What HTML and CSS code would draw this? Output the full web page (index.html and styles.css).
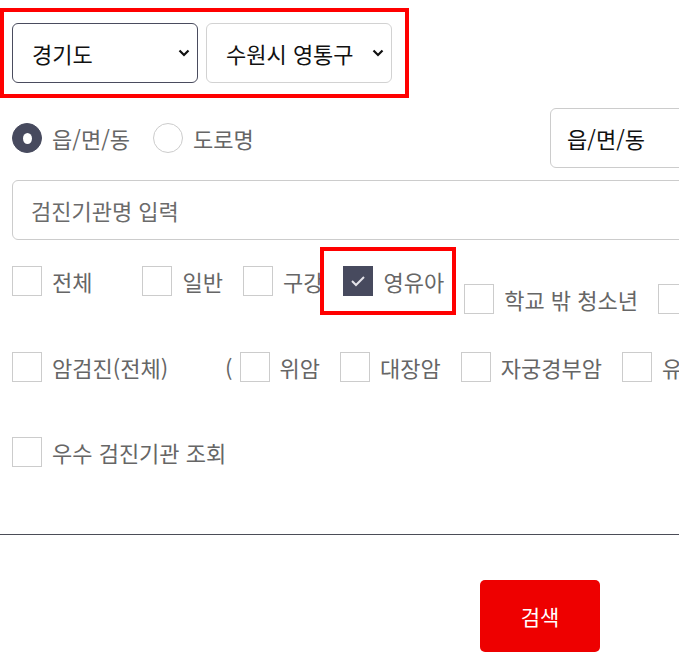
FILE: index.html
```html
<!DOCTYPE html>
<html lang="ko">
<head>
    <meta charset="UTF-8">
    <meta name="viewport" content="width=device-width, initial-scale=1.0">
    <title>검진기관 찾기</title>
    <link rel="stylesheet" href="styles.css">
</head>
<body>
    <div class="page">
        <!-- 시/도, 시/군/구 선택 -->
        <div class="region">
            <div class="select active">
                <span>경기도</span>
                <svg class="chev" width="12" height="8" viewBox="0 0 12 8"><polyline points="1.5,1.5 6,6 10.5,1.5" /></svg>
            </div>
            <div class="select">
                <span>수원시 영통구</span>
                <svg class="chev" width="12" height="8" viewBox="0 0 12 8"><polyline points="1.5,1.5 6,6 10.5,1.5" /></svg>
            </div>
        </div>

        <div class="form">
            <!-- 주소 구분 -->
            <div class="addr-row">
                <div class="radios">
                    <label class="radio"><span class="dot on"></span>읍/면/동</label>
                    <label class="radio"><span class="dot"></span>도로명</label>
                </div>
                <div class="field dong">읍/면/동</div>
            </div>

            <input type="text" class="field name" placeholder="검진기관명 입력">

            <!-- 검진 종류 -->
            <div class="checks first">
                <label class="check wide"><span class="box"></span>전체</label>
                <label class="check"><span class="box"></span>일반</label>
                <label class="check tight"><span class="box"></span>구강</label>
                <label class="check highlight"><span class="box on"><svg width="30" height="30" viewBox="0 0 30 30"><polyline points="9,15 13,19 21,11" /></svg></span>영유아</label>
                <label class="check low"><span class="box"></span>학교 밖 청소년</label>
                <label class="check low"><span class="box"></span></label>
            </div>

            <div class="checks second">
                <label class="check cancer"><span class="box"></span>암검진(전체)</label>
                <span class="paren">(</span>
                <label class="check"><span class="box"></span>위암</label>
                <label class="check"><span class="box"></span>대장암</label>
                <label class="check"><span class="box"></span>자궁경부암</label>
                <label class="check"><span class="box"></span>유방암</label>
            </div>

            <div class="checks third">
                <label class="check"><span class="box"></span>우수 검진기관 조회</label>
            </div>
        </div>

        <hr class="divider">

        <div class="actions">
            <button class="btn-search">검색</button>
        </div>
    </div>
</body>
</html>
```

FILE: styles.css
```css
/* Base */
html, body {
    margin: 0;
    overflow: hidden;
}

body {
    font-family: "Noto Sans CJK KR", "Noto Sans", sans-serif;
    font-size: 22px;
    color: #666;
    background: #fff;
}

/* the page is wider than the window and gets clipped */
.page {
    width: 1080px;
}

/* Region selects (highlighted) */
.region {
    display: inline-flex;
    gap: 8px;
    margin-top: 8px;
    padding: 11px 13px 11px 8px;
    border: 4px solid #ff0000;
}

.select {
    box-sizing: border-box;
    width: 186px;
    height: 60px;
    padding: 0 7px 0 19px;
    border: 1px solid #d2d2d2;
    border-radius: 6px;
    display: flex;
    align-items: center;
    justify-content: space-between;
    color: #111;
}

.select.active {
    border-color: #4a4c5e;
}

.chev polyline {
    fill: none;
    stroke: #111;
    stroke-width: 2.2;
}

/* Form */
.form {
    padding: 0 12px;
}

.addr-row {
    display: grid;
    grid-template-columns: 538px 1fr;
    align-items: center;
    height: 60px;
    margin-top: 10px;
}

.radios {
    display: flex;
    align-items: center;
}

.radio {
    display: flex;
    align-items: center;
    gap: 10px;
    margin-right: 23px;
}

.dot {
    box-sizing: border-box;
    width: 30px;
    height: 30px;
    border: 1px solid #ccc;
    border-radius: 50%;
    position: relative;
}

.dot.on {
    border-color: #474a5e;
    background: #474a5e;
}

.dot.on::after {
    content: "";
    position: absolute;
    left: 10px;
    top: 9px;
    width: 9px;
    height: 11px;
    border-radius: 50%;
    background: #fff;
}

.field {
    box-sizing: border-box;
    height: 60px;
    border: 1px solid #ccc;
    border-radius: 6px;
    display: flex;
    align-items: center;
    font-family: inherit;
    font-size: 22px;
}

.dong {
    padding-left: 16px;
    color: #111;
}

.name {
    width: 100%;
    margin-top: 12px;
    padding: 0 18px;
    color: #333;
    outline: none;
}

.name::placeholder {
    color: #6b6b6b;
}

/* Checkboxes */
.checks {
    display: flex;
    align-items: center;
    white-space: nowrap;
    line-height: 30px;
}

.checks.first {
    height: 68px;
    margin-top: 7px;
}

.checks.second {
    margin-top: 37px;
}

.checks.third {
    margin-top: 55px;
}

.check {
    display: flex;
    align-items: center;
    gap: 10px;
    height: 30px;
    margin-right: 20px;
}

.check.wide {
    margin-right: 50px;
}

.check.tight {
    margin-right: -3px;
}

.check.cancer {
    margin-right: 57px;
}

.check.low {
    align-self: flex-end;
    margin-bottom: 1px;
}

.box {
    box-sizing: border-box;
    width: 30px;
    height: 30px;
    flex: none;
    border: 1px solid #ccc;
    background: #fff;
}

.box.on {
    border-color: #474a5e;
    background: #474a5e;
}

.box svg {
    display: block;
    margin: -1px;
}

.box svg polyline {
    fill: none;
    stroke: #e4e4ea;
    stroke-width: 2;
}

.highlight {
    position: relative;
    z-index: 1;
    box-sizing: border-box;
    height: 68px;
    margin-right: 8px;
    padding: 0 8px 0 19px;
    border: 4px solid #ff0000;
    background: #fff;
}

.paren {
    margin-right: 7px;
}

/* Divider and button */
.divider {
    margin: 67px 0 0;
    border: none;
    border-top: 1px solid #4b4d57;
}

.actions {
    display: flex;
    justify-content: center;
    padding-top: 45px;
}

.btn-search {
    width: 120px;
    height: 72px;
    border: none;
    border-radius: 5px;
    background: #ee0000;
    color: #fff;
    font-family: inherit;
    font-size: 21px;
    cursor: pointer;
}
```
